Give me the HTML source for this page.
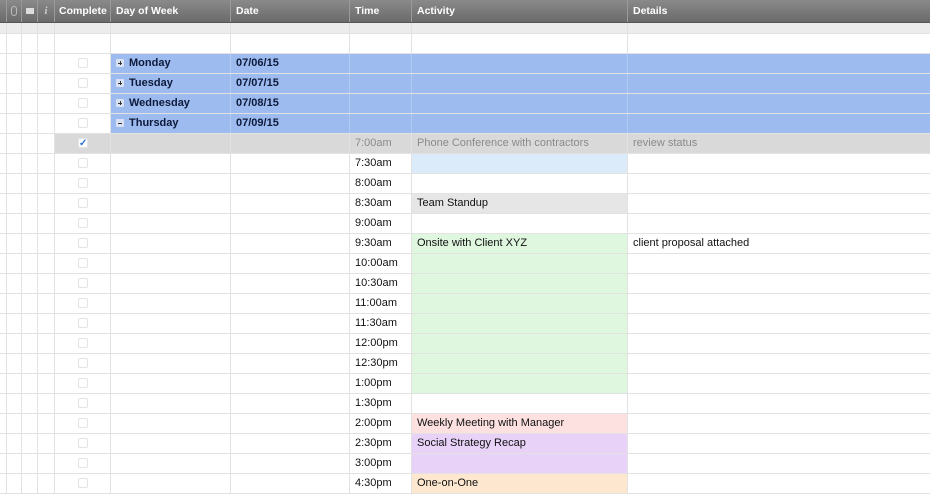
<!DOCTYPE html>
<html><head><style>
body{margin:0;width:930px;height:494px;overflow:hidden;background:#fff;font-family:"Liberation Sans",Arial,sans-serif;font-size:11px;color:#111}
.r{display:flex;height:20px;box-sizing:border-box;border-bottom:1px solid #e2e2e2}
.r>div{box-sizing:border-box;border-right:1px solid #e2e2e2;height:100%;line-height:19px;padding-left:5px;white-space:nowrap;overflow:hidden}
.r>div:last-child{border-right:none}
.c0{width:7px}.c1{width:15px}.c2{width:16px}.c3{width:17px}.c4{width:56px;position:relative}.c5{width:120px}.c6{width:119px}.c7{width:62px}.c8{width:216px}.c9{width:302px}
.r>.c0,.r>.c1,.r>.c2,.r>.c3{padding:0}
.hd{height:23px;background:linear-gradient(#8a8a8a,#6a6a6a);border-bottom:1px solid #555}
.hd>div{color:#fff;font-weight:bold;font-size:10.5px;line-height:22px;border-right:1px solid #9a9a9a}
.r.hd>.c4{padding-left:4px}
.hd .ic{text-align:center;color:#ccc;font-size:9px}
.g{height:11px;background:#ececec}
.w{height:20px}
.cb{position:absolute;left:23px;top:4px;width:10px;height:10px;border:1px solid #e4e4e4;border-radius:2px;box-sizing:border-box}
.blue{background:#9dbbef;font-weight:bold;color:#0d1a3a}
.r>.blue{border-right-color:#b3cbf3}
.tog{display:inline-block;width:8px;height:8px;background:#d8e2f2;border-radius:1px;margin-right:5px;vertical-align:-1px;position:relative}
.tog:before{content:"";position:absolute;left:2px;top:3.5px;width:4px;height:1px;background:#333}
.tog.p:after{content:"";position:absolute;left:3.5px;top:2px;width:1px;height:4px;background:#333}
.gr{background:#d9d9d9;color:#8a8a8a}
</style></head><body>
<div class="r hd"><div class="c0"></div><div class="c1 ic"><span style="display:inline-block;width:4px;height:8px;border:1px solid #bbb;border-radius:3px;margin-top:6px;vertical-align:top"></span></div><div class="c2 ic"><span style="display:inline-block;width:8px;height:6px;background:#ddd;margin-top:8px;vertical-align:top"></span></div><div class="c3 ic" style="font-style:italic;font-family:'Liberation Serif',serif;font-size:11px">i</div><div class="c4">Complete</div><div class="c5">Day of Week</div><div class="c6">Date</div><div class="c7">Time</div><div class="c8">Activity</div><div class="c9">Details</div></div>
<div class="r g"><div class="c0"></div><div class="c1"></div><div class="c2"></div><div class="c3"></div><div class="c4"></div><div class="c5"></div><div class="c6"></div><div class="c7"></div><div class="c8"></div><div class="c9"></div></div>
<div class="r w"><div class="c0"></div><div class="c1"></div><div class="c2"></div><div class="c3"></div><div class="c4"></div><div class="c5"></div><div class="c6"></div><div class="c7"></div><div class="c8"></div><div class="c9"></div></div>
<div class="r"><div class="c0"></div><div class="c1"></div><div class="c2"></div><div class="c3"></div><div class="c4"><span class="cb"></span></div><div class="c5 blue"><span class="tog p"></span>Monday</div><div class="c6 blue">07/06/15</div><div class="c7 blue"></div><div class="c8 blue"></div><div class="c9 blue"></div></div>
<div class="r"><div class="c0"></div><div class="c1"></div><div class="c2"></div><div class="c3"></div><div class="c4"><span class="cb"></span></div><div class="c5 blue"><span class="tog p"></span>Tuesday</div><div class="c6 blue">07/07/15</div><div class="c7 blue"></div><div class="c8 blue"></div><div class="c9 blue"></div></div>
<div class="r"><div class="c0"></div><div class="c1"></div><div class="c2"></div><div class="c3"></div><div class="c4"><span class="cb"></span></div><div class="c5 blue"><span class="tog p"></span>Wednesday</div><div class="c6 blue">07/08/15</div><div class="c7 blue"></div><div class="c8 blue"></div><div class="c9 blue"></div></div>
<div class="r"><div class="c0"></div><div class="c1"></div><div class="c2"></div><div class="c3"></div><div class="c4"><span class="cb"></span></div><div class="c5 blue"><span class="tog"></span>Thursday</div><div class="c6 blue">07/09/15</div><div class="c7 blue"></div><div class="c8 blue"></div><div class="c9 blue"></div></div>
<div class="r"><div class="c0"></div><div class="c1"></div><div class="c2"></div><div class="c3"></div><div class="c4 gr"><span class="cb" style="background:#fff;color:#2a6fc9;font-size:10px;line-height:9px;text-align:center;font-weight:bold">✓</span></div><div class="c5 gr"></div><div class="c6 gr"></div><div class="c7 gr">7:00am</div><div class="c8 gr">Phone Conference with contractors</div><div class="c9 gr">review status</div></div>
<div class="r"><div class="c0"></div><div class="c1"></div><div class="c2"></div><div class="c3"></div><div class="c4"><span class="cb"></span></div><div class="c5"></div><div class="c6"></div><div class="c7">7:30am</div><div class="c8" style="background:#dcebf9"></div><div class="c9"></div></div>
<div class="r"><div class="c0"></div><div class="c1"></div><div class="c2"></div><div class="c3"></div><div class="c4"><span class="cb"></span></div><div class="c5"></div><div class="c6"></div><div class="c7">8:00am</div><div class="c8"></div><div class="c9"></div></div>
<div class="r"><div class="c0"></div><div class="c1"></div><div class="c2"></div><div class="c3"></div><div class="c4"><span class="cb"></span></div><div class="c5"></div><div class="c6"></div><div class="c7">8:30am</div><div class="c8" style="background:#e6e6e6">Team Standup</div><div class="c9"></div></div>
<div class="r"><div class="c0"></div><div class="c1"></div><div class="c2"></div><div class="c3"></div><div class="c4"><span class="cb"></span></div><div class="c5"></div><div class="c6"></div><div class="c7">9:00am</div><div class="c8"></div><div class="c9"></div></div>
<div class="r"><div class="c0"></div><div class="c1"></div><div class="c2"></div><div class="c3"></div><div class="c4"><span class="cb"></span></div><div class="c5"></div><div class="c6"></div><div class="c7">9:30am</div><div class="c8" style="background:#dff6df">Onsite with Client XYZ</div><div class="c9">client proposal attached</div></div>
<div class="r"><div class="c0"></div><div class="c1"></div><div class="c2"></div><div class="c3"></div><div class="c4"><span class="cb"></span></div><div class="c5"></div><div class="c6"></div><div class="c7">10:00am</div><div class="c8" style="background:#dff6df"></div><div class="c9"></div></div>
<div class="r"><div class="c0"></div><div class="c1"></div><div class="c2"></div><div class="c3"></div><div class="c4"><span class="cb"></span></div><div class="c5"></div><div class="c6"></div><div class="c7">10:30am</div><div class="c8" style="background:#dff6df"></div><div class="c9"></div></div>
<div class="r"><div class="c0"></div><div class="c1"></div><div class="c2"></div><div class="c3"></div><div class="c4"><span class="cb"></span></div><div class="c5"></div><div class="c6"></div><div class="c7">11:00am</div><div class="c8" style="background:#dff6df"></div><div class="c9"></div></div>
<div class="r"><div class="c0"></div><div class="c1"></div><div class="c2"></div><div class="c3"></div><div class="c4"><span class="cb"></span></div><div class="c5"></div><div class="c6"></div><div class="c7">11:30am</div><div class="c8" style="background:#dff6df"></div><div class="c9"></div></div>
<div class="r"><div class="c0"></div><div class="c1"></div><div class="c2"></div><div class="c3"></div><div class="c4"><span class="cb"></span></div><div class="c5"></div><div class="c6"></div><div class="c7">12:00pm</div><div class="c8" style="background:#dff6df"></div><div class="c9"></div></div>
<div class="r"><div class="c0"></div><div class="c1"></div><div class="c2"></div><div class="c3"></div><div class="c4"><span class="cb"></span></div><div class="c5"></div><div class="c6"></div><div class="c7">12:30pm</div><div class="c8" style="background:#dff6df"></div><div class="c9"></div></div>
<div class="r"><div class="c0"></div><div class="c1"></div><div class="c2"></div><div class="c3"></div><div class="c4"><span class="cb"></span></div><div class="c5"></div><div class="c6"></div><div class="c7">1:00pm</div><div class="c8" style="background:#dff6df"></div><div class="c9"></div></div>
<div class="r"><div class="c0"></div><div class="c1"></div><div class="c2"></div><div class="c3"></div><div class="c4"><span class="cb"></span></div><div class="c5"></div><div class="c6"></div><div class="c7">1:30pm</div><div class="c8"></div><div class="c9"></div></div>
<div class="r"><div class="c0"></div><div class="c1"></div><div class="c2"></div><div class="c3"></div><div class="c4"><span class="cb"></span></div><div class="c5"></div><div class="c6"></div><div class="c7">2:00pm</div><div class="c8" style="background:#fde0e0">Weekly Meeting with Manager</div><div class="c9"></div></div>
<div class="r"><div class="c0"></div><div class="c1"></div><div class="c2"></div><div class="c3"></div><div class="c4"><span class="cb"></span></div><div class="c5"></div><div class="c6"></div><div class="c7">2:30pm</div><div class="c8" style="background:#e8d2f8">Social Strategy Recap</div><div class="c9"></div></div>
<div class="r"><div class="c0"></div><div class="c1"></div><div class="c2"></div><div class="c3"></div><div class="c4"><span class="cb"></span></div><div class="c5"></div><div class="c6"></div><div class="c7">3:00pm</div><div class="c8" style="background:#e8d2f8"></div><div class="c9"></div></div>
<div class="r"><div class="c0"></div><div class="c1"></div><div class="c2"></div><div class="c3"></div><div class="c4"><span class="cb"></span></div><div class="c5"></div><div class="c6"></div><div class="c7">4:30pm</div><div class="c8" style="background:#fde8cf">One-on-One</div><div class="c9"></div></div>
</body></html>
